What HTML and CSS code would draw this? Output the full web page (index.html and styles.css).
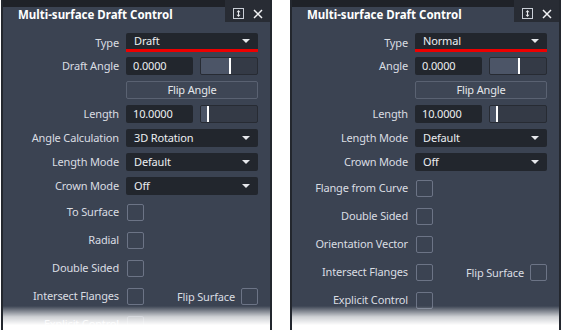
FILE: index.html
```html
<!DOCTYPE html>
<html>
<head>
<meta charset="utf-8">
<link rel="stylesheet" href="styles.css">
</head>
<body>
<div class="screen">
  <div class="panel">
    <div class="titlebar">
      <div class="tab">Multi-surface Draft Control</div>
      <div class="tools">
        <svg class="ico-dock" width="11" height="11" viewBox="0 0 11 11"><rect x="0.5" y="0.5" width="10" height="10" fill="none" stroke="#c9ced6"/><path d="M5.5 2 L7.5 4.3 H3.5 Z M5.5 9 L7.5 6.7 H3.5 Z" fill="#e8eaee"/><rect x="5" y="4" width="1" height="3" fill="#e8eaee"/></svg>
        <svg class="ico-close" width="10" height="10" viewBox="0 0 10 10"><path d="M1 1 L9 9 M9 1 L1 9" stroke="#f2f3f5" stroke-width="1.5"/></svg>
      </div>
    </div>
    <div class="body">
      <div class="row"><span class="lbl">Type</span><div class="select type">Draft<i class="caret"></i></div></div>
      <div class="row"><span class="lbl">Draft Angle</span><div class="pair"><div class="input">0.0000</div><div class="slider"><div class="fill" style="width:28px"></div><div class="knob"></div></div></div></div>
      <div class="row"><span class="lbl"></span><div class="button">Flip Angle</div></div>
      <div class="row"><span class="lbl">Length</span><div class="pair"><div class="input">10.0000</div><div class="slider"><div class="fill" style="width:6px"></div><div class="knob"></div></div></div></div>
      <div class="row"><span class="lbl">Angle Calculation</span><div class="select">3D Rotation<i class="caret"></i></div></div>
      <div class="row"><span class="lbl">Length Mode</span><div class="select">Default<i class="caret"></i></div></div>
      <div class="row"><span class="lbl">Crown Mode</span><div class="select">Off<i class="caret"></i></div></div>
      <div class="row check"><span class="lbl">To Surface</span><div class="cbs"><span class="cb"></span></div></div>
      <div class="row check"><span class="lbl">Radial</span><div class="cbs"><span class="cb"></span></div></div>
      <div class="row check"><span class="lbl">Double Sided</span><div class="cbs"><span class="cb"></span></div></div>
      <div class="row check"><span class="lbl">Intersect Flanges</span><div class="cbs"><span class="cb"></span><span class="lbl2">Flip Surface</span><span class="cb"></span></div></div>
      <div class="row check"><span class="lbl">Explicit Control</span><div class="cbs"><span class="cb"></span></div></div>
    </div>
    <div class="fade"></div>
  </div>

  <div class="panel">
    <div class="titlebar">
      <div class="tab">Multi-surface Draft Control</div>
      <div class="tools">
        <svg class="ico-dock" width="11" height="11" viewBox="0 0 11 11"><rect x="0.5" y="0.5" width="10" height="10" fill="none" stroke="#c9ced6"/><path d="M5.5 2 L7.5 4.3 H3.5 Z M5.5 9 L7.5 6.7 H3.5 Z" fill="#e8eaee"/><rect x="5" y="4" width="1" height="3" fill="#e8eaee"/></svg>
        <svg class="ico-close" width="10" height="10" viewBox="0 0 10 10"><path d="M1 1 L9 9 M9 1 L1 9" stroke="#f2f3f5" stroke-width="1.5"/></svg>
      </div>
    </div>
    <div class="body">
      <div class="row"><span class="lbl">Type</span><div class="select type">Normal<i class="caret"></i></div></div>
      <div class="row"><span class="lbl">Angle</span><div class="pair"><div class="input">0.0000</div><div class="slider"><div class="fill" style="width:28px"></div><div class="knob"></div></div></div></div>
      <div class="row"><span class="lbl"></span><div class="button">Flip Angle</div></div>
      <div class="row"><span class="lbl">Length</span><div class="pair"><div class="input">10.0000</div><div class="slider"><div class="fill" style="width:6px"></div><div class="knob"></div></div></div></div>
      <div class="row"><span class="lbl">Length Mode</span><div class="select">Default<i class="caret"></i></div></div>
      <div class="row"><span class="lbl">Crown Mode</span><div class="select">Off<i class="caret"></i></div></div>
      <div class="row check"><span class="lbl">Flange from Curve</span><div class="cbs"><span class="cb"></span></div></div>
      <div class="row check"><span class="lbl">Double Sided</span><div class="cbs"><span class="cb"></span></div></div>
      <div class="row check"><span class="lbl">Orientation Vector</span><div class="cbs"><span class="cb"></span></div></div>
      <div class="row check"><span class="lbl">Intersect Flanges</span><div class="cbs"><span class="cb"></span><span class="lbl2">Flip Surface</span><span class="cb"></span></div></div>
      <div class="row check"><span class="lbl">Explicit Control</span><div class="cbs"><span class="cb"></span></div></div>
    </div>
    <div class="fade"></div>
  </div>
</div>
</body>
</html>
```

FILE: styles.css
```css
* { box-sizing: border-box; }
html, body { margin: 0; padding: 0; background: #ffffff; }
body { font-family: "Noto Sans", "Open Sans", sans-serif; font-size: 11px; letter-spacing: -0.15px; }

.screen {
  display: flex;
  gap: 18px;
  padding-left: 1px;
  width: 569px;
  height: 330px;
  overflow: hidden;
}

.panel {
  position: relative;
  width: 271px;
  height: 330px;
  background: #3b4352;
  border-left: 2px solid #23272e;
  border-right: 2px solid #23272e;
  overflow: hidden;
}

.titlebar {
  display: flex;
  height: 22px;
  background: #1f2228;
}
.tab {
  flex: 1;
  margin-top: 7px;
  height: 15px;
  background: #3b4352;
  padding-left: 15px;
  color: #ffffff;
  font-weight: 700;
  font-size: 11.5px;
  letter-spacing: 0;
  line-height: 15px;
  white-space: nowrap;
}
.tools {
  width: 45px;
  display: flex;
  align-items: center;
  padding-left: 8px;
  padding-top: 5px;
  gap: 9px;
  background: #282c34;
}

.body {
  padding-top: 11px;
  display: flex;
  flex-direction: column;
  gap: 6px;
}

.row {
  display: grid;
  grid-template-columns: 116px 132px;
  column-gap: 7px;
  height: 18px;
  align-items: center;
}
.row.check { height: 22px; }

.lbl {
  text-align: right;
  color: #dadde2;
  white-space: nowrap;
  line-height: 18px;
}
.lbl2 {
  margin-left: auto;
  margin-right: 6px;
  color: #dadde2;
  white-space: nowrap;
}

.select, .input {
  position: relative;
  height: 18px;
  background: #22262d;
  border-radius: 2px;
  color: #eceef1;
  padding-left: 8px;
  line-height: 18px;
}
.select.type {
  height: 19px;
  line-height: 16px;
  border-bottom: 3px solid #ee0000;
  border-radius: 2px 2px 0 0;
}
.caret {
  position: absolute;
  right: 8px;
  top: 7px;
  width: 0;
  height: 0;
  border-left: 4px solid transparent;
  border-right: 4px solid transparent;
  border-top: 4px solid #e6e8ec;
}
.select.type .caret { top: 6px; }

.pair {
  display: flex;
  gap: 7px;
  height: 18px;
}
.input { width: 67px; padding-left: 7px; }
.slider {
  position: relative;
  width: 58px;
  height: 18px;
  display: flex;
  background: #343a46;
  border: 1px solid #272b33;
  border-radius: 2px;
  overflow: hidden;
}
.fill { height: 100%; background: #4c5567; }
.knob { width: 2px; height: 100%; background: #ffffff; }

.button {
  height: 18px;
  border: 1px solid #5a6272;
  border-radius: 2px;
  background: #3e4655;
  color: #e4e7eb;
  text-align: center;
  line-height: 16px;
}

.cbs {
  display: flex;
  align-items: center;
  height: 22px;
}
.cb {
  display: block;
  width: 17px;
  height: 17px;
  margin-left: 1px;
  border: 1px solid #6c7486;
  border-radius: 2px;
  flex: none;
}
.lbl2 + .cb { margin-left: 0; }

.fade {
  position: absolute;
  left: -2px;
  right: -2px;
  bottom: 0;
  height: 24px;
  background: linear-gradient(to bottom, rgba(255,255,255,0) 0%, rgba(255,255,255,0.75) 45%, #ffffff 80%);
}
```
